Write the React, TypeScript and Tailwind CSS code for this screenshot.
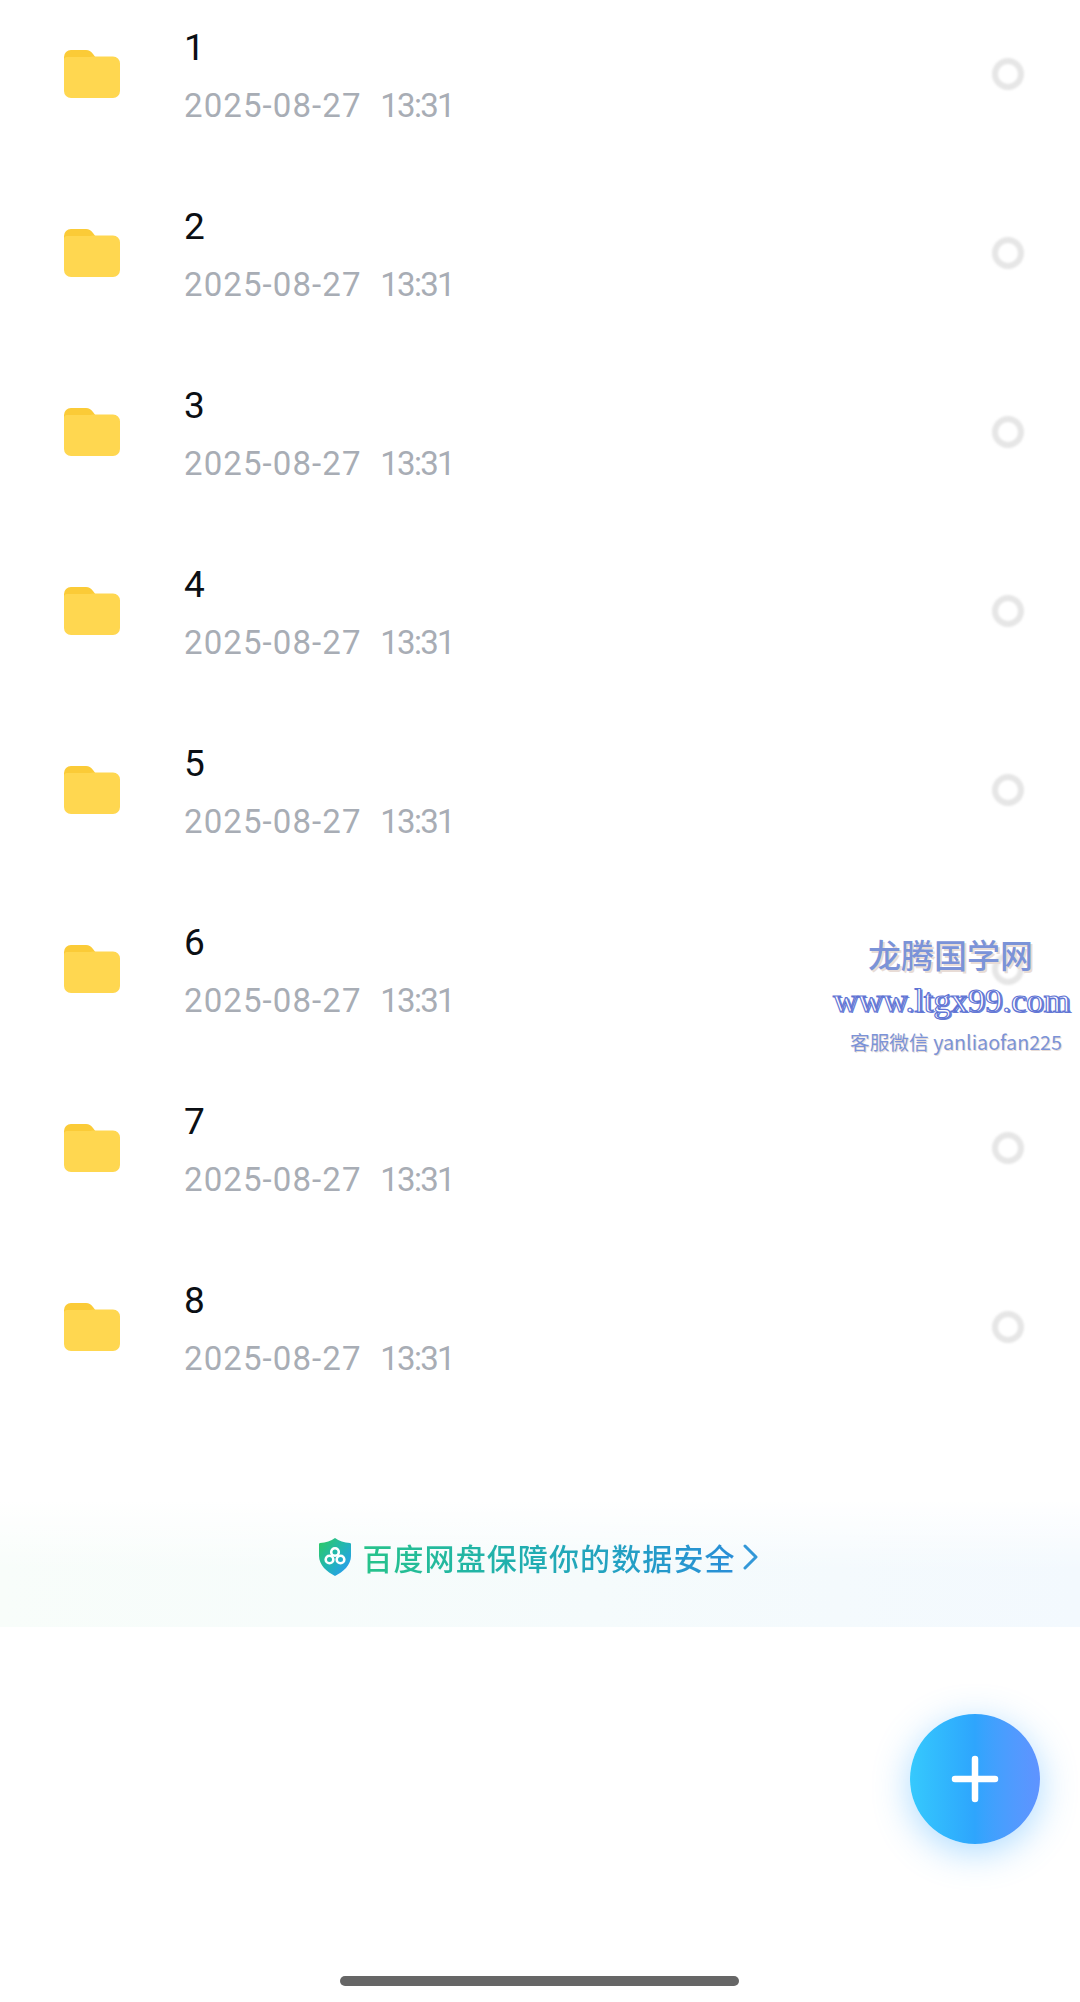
const rows = ["1", "2", "3", "4", "5", "6", "7", "8"];

function Folder() {
  return (
    <svg width="56" height="50" viewBox="0 0 56 50" className="shrink-0">
      <path d="M0 8a7 7 0 0 1 7-7h15c3 0 5 1.2 7 4l3 4v8H0z" fill="#fbcb37" />
      <path d="M0 11a3 3 0 0 1 3-3h23l3-.5h20a7 7 0 0 1 7 7V42a7 7 0 0 1-7 7H7a7 7 0 0 1-7-7z" fill="#ffd750" />
    </svg>
  );
}

function Row({ name }: { name: string }) {
  return (
    <div className="flex h-[179px] items-center pl-16 pr-[56px]">
      <Folder />
      <div className="ml-16 flex-1 pt-[7px] font-['Roboto',sans-serif]">
        <div className="text-[37px] leading-[44px] text-[#0b0f14]">{name}</div>
        <div className="mt-[14px] whitespace-pre text-[33px] leading-[44px] tracking-[1.1px] text-[#a8adb5]">
          2025-08-27  <span className="tracking-[-1.7px]">13:31</span>
        </div>
      </div>
      <div className="size-[32px] rounded-full border-[6px] border-[#e6e6e6] bg-white blur-[0.8px]" />
    </div>
  );
}

function Shield() {
  return (
    <svg width="32" height="38" viewBox="0 0 32 38" className="shrink-0">
      <defs>
        <linearGradient id="sh" x1="0" y1="0" x2="1" y2="1">
          <stop offset="0" stopColor="#2ecb5e" />
          <stop offset="0.5" stopColor="#22b6b4" />
          <stop offset="1" stopColor="#2a96ff" />
        </linearGradient>
      </defs>
      <path d="M16 0c4 3 9 4.500 15 5 1 .1 1 1 1 2v11c0 9-8 16-16 20C8 34 0 27 0 18V7c0-1 0-1.900 1-2C7 4.500 12 3 16 0z" fill="url(#sh)" />
      <g fill="none" stroke="#fff" strokeWidth="2.600">
        <circle cx="16" cy="14" r="3.800" />
        <circle cx="10.500" cy="21.500" r="3.800" />
        <circle cx="21.500" cy="21.500" r="3.800" />
      </g>
    </svg>
  );
}

export default function App() {
  return (
    <div className="relative h-[2002px] w-[1080px] overflow-hidden bg-white">
      <div className="-mt-[16px]">
        {rows.map((r) => (
          <Row key={r} name={r} />
        ))}
      </div>

      <div className="mt-[84px] flex h-[127px] items-center justify-center bg-[linear-gradient(to_bottom,#ffffff,rgba(255,255,255,0)_55%),linear-gradient(to_right,#f8fdfa,#f5fbfc_55%,#f3f9fe)] pb-[14px] pr-[2px]">
        <Shield />
        <span className="ml-[11px] bg-gradient-to-r from-[#27c38a] to-[#2a8ed8] bg-clip-text font-['Noto_Sans_CJK_SC',sans-serif] text-[30px] font-medium leading-[40px] tracking-[1.1px] text-transparent">
          百度网盘保障你的数据安全
        </span>
        <svg width="16" height="26" viewBox="0 0 16 26" className="ml-[7px]">
          <path d="M2 2l11 11L2 24" fill="none" stroke="#3398d8" strokeWidth="3" strokeLinecap="round" strokeLinejoin="round" />
        </svg>
      </div>

      <div className="absolute left-[910px] top-[1714px] flex size-[130px] items-center justify-center rounded-full bg-gradient-to-r from-[#36c9fd] via-[#2ea5fd] to-[#5f93ff] shadow-[0_8px_36px_rgba(60,170,255,0.42)]">
        <svg width="48" height="48" viewBox="0 0 48 48">
          <path d="M24 4v40M4 24h40" stroke="#fff" strokeWidth="6.500" strokeLinecap="round" />
        </svg>
      </div>

      <div className="absolute left-[340px] top-[1976px] h-[10px] w-[399px] rounded-full bg-[#666666]" />

      <div className="absolute left-[830px] top-[932px] w-[250px] text-center">
        <div className="pr-[9px] font-['Noto_Sans_CJK_SC',sans-serif] text-[33px] font-medium leading-[44px] text-[#7b93d8] [text-shadow:2px_2px_0_#e8dcd6]">
          龙腾国学网
        </div>
        <div className="mt-[3px] whitespace-nowrap pl-[3px] text-left font-['Liberation_Serif',serif] text-[34.500px] leading-[42px] text-white [-webkit-text-stroke:1.200px_#5f74d4] [text-shadow:2px_1px_0_#6c80d8]">
          www.ltgx99.com
        </div>
        <div className="mt-[7px] whitespace-nowrap pl-[20px] text-left font-['Noto_Sans_CJK_SC',sans-serif] text-[19.700px] leading-[28px] text-[#7b93d8] [text-shadow:1px_1px_0_#e8dcd6]">
          客服微信 yanliaofan225
        </div>
      </div>
    </div>
  );
}
